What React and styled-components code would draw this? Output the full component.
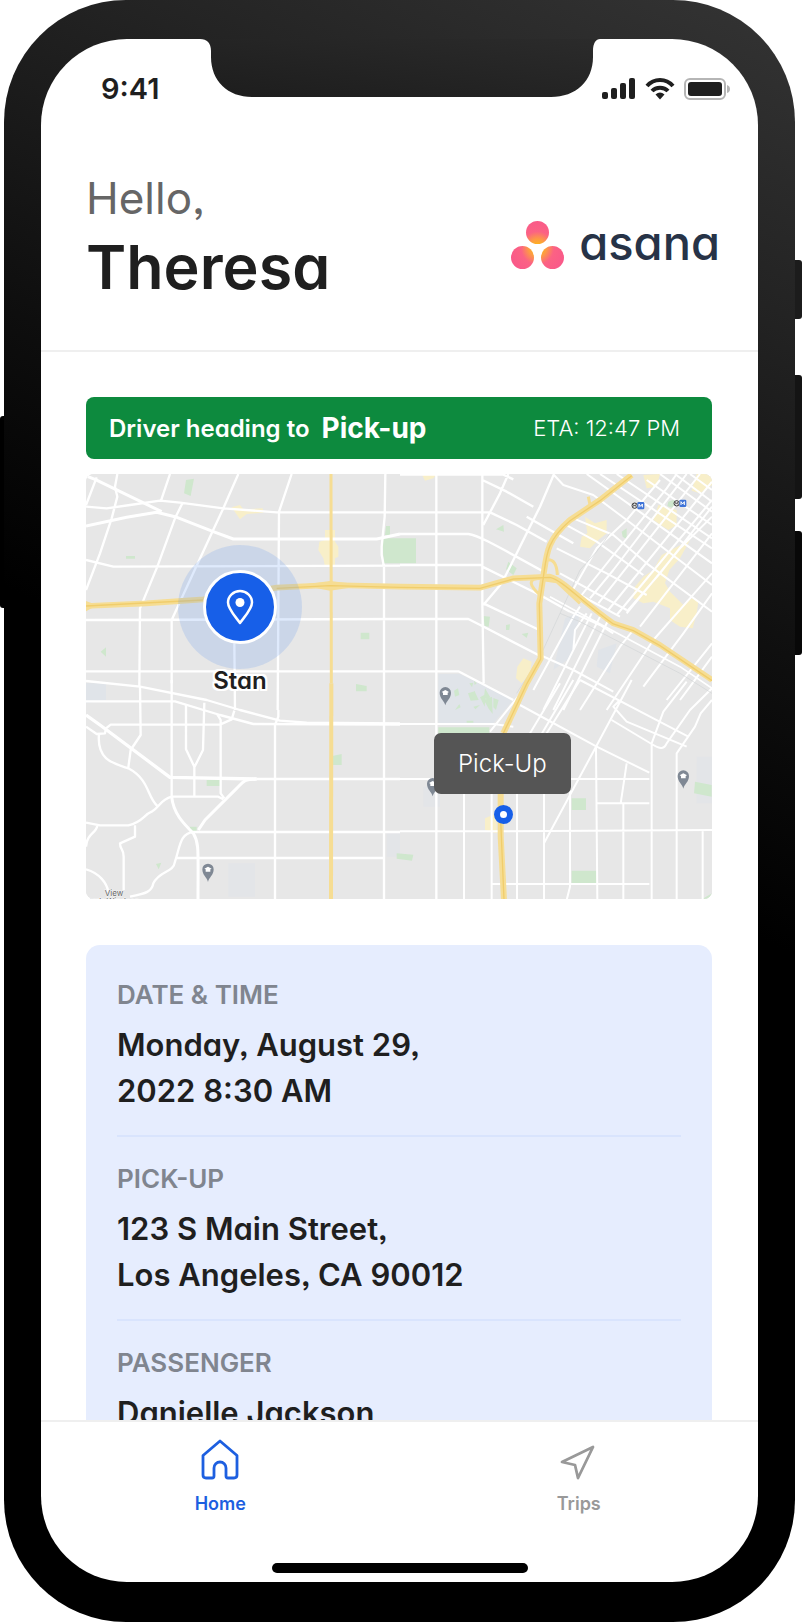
import React from "react";
import styled, { createGlobalStyle } from "styled-components";

const GlobalStyle = createGlobalStyle`
  *, *::before, *::after { box-sizing: border-box; }
  body {
    margin: 0;
    background: #fff;
    color: #1f1f1f;
    font-family: Inter, "Liberation Sans", sans-serif;
    font-feature-settings: "cv11" 1, "ss03" 1;
  }
  h1, p, dl, dt, dd { margin: 0; }
`;

const Stage = styled.div`
  height: 100vh;
  padding: 0 7px 0 4px;
`;

const Phone = styled.div`
  position: relative;
  display: flex;
  height: 100%;
  padding: 39px 37px 40px;
  border-radius: 122px;
  background: linear-gradient(205deg, #343434 0%, #232323 16%, #0e0e0e 34%, #000 48%);
`;

const SideButton = styled.span`
  position: absolute;
  top: ${(p) => p.$top}px;
  height: ${(p) => p.$length}px;
  width: 10px;
  ${(p) => (p.$side === "left" ? "left: -4px;" : "right: -7px;")}
  border-radius: 3px;
  background: ${(p) => p.$color};
  z-index: -1;
`;

const Screen = styled.div`
  flex: 1;
  min-width: 0;
  display: flex;
  flex-direction: column;
  overflow: hidden;
  border-radius: 86px;
  background: #fff;
`;

const StatusBar = styled.div`
  display: grid;
  grid-template-columns: minmax(0, 1fr) 400px minmax(0, 1fr);
  height: 100px;
`;

const Clock = styled.time`
  padding: 32px 0 0 60px;
  font-size: 29px;
  line-height: 36px;
  font-weight: 600;
`;

const StatusIcons = styled.div`
  display: flex;
  justify-content: flex-end;
  align-items: flex-start;
  gap: 9px;
  padding: 39px 28px 0 0;
`;

const Header = styled.header`
  display: flex;
  justify-content: space-between;
  align-items: center;
  padding: 31px 38px 45px 45px;
  border-bottom: 2px solid #efefef;
`;

const Greeting = styled.h1`
  display: flex;
  flex-direction: column;
  gap: 3px;
  font-weight: 600;
  font-size: 61px;
  line-height: 76px;
`;

const Hello = styled.span`
  color: #666;
  font-size: 44px;
  font-weight: 400;
  line-height: 56px;
`;

const Brand = styled.div`
  display: flex;
  align-items: center;
  gap: 15px;
  padding-top: 14px;
`;

const BrandName = styled.span`
  color: #273347;
  font-size: 47px;
  font-weight: 500;
  line-height: 48px;
  padding-bottom: 4px;
`;

const Content = styled.main`
  flex: 1 1 0;
  min-height: 0;
  overflow-y: auto;
  scrollbar-width: none;
  padding: 45px 46px 0 45px;
`;

const Banner = styled.p`
  display: flex;
  align-items: center;
  height: 62px;
  margin-bottom: 15px;
  padding: 0 32px 0 23px;
  border-radius: 8px;
  background: #0d8a3e;
  color: #fff;
  font-size: 24px;
  font-weight: 600;
`;

const Destination = styled.strong`
  margin-left: 12px;
  font-size: 28px;
  font-weight: 700;
`;

const Eta = styled.span`
  margin-left: auto;
  font-size: 22px;
  font-weight: 300;
`;

const MapFrame = styled.section`
  position: relative;
  overflow: hidden;
  aspect-ratio: 626 / 425;
  margin-bottom: 46px;
  border-radius: 8px;
  background: #e7e7e7;
`;

const MapDrawing = styled.svg`
  display: block;
  width: 100%;
  height: 100%;
`;

const DriverPin = styled.div`
  position: absolute;
  left: 24.6%;
  top: 31.3%;
  width: 124px;
  height: 124px;
  margin: -62px 0 0 -62px;
  display: grid;
  place-items: center;
  border-radius: 50%;
  background: rgba(94, 148, 238, 0.2);
`;

const DriverDot = styled.div`
  display: grid;
  place-items: center;
  width: 74px;
  height: 74px;
  border: 3px solid #fff;
  border-radius: 50%;
  background: #175fe8;
`;

const DriverName = styled.span`
  position: absolute;
  top: 122px;
  font-size: 24px;
  font-weight: 600;
  line-height: 28px;
  text-shadow: 2px 0 #fff, -2px 0 #fff, 0 2px #fff, 0 -2px #fff, 2px 2px #fff,
    -2px 2px #fff, 2px -2px #fff, -2px -2px #fff;
`;

const PickupPin = styled.div`
  position: absolute;
  left: 66.7%;
  top: 80.2%;
  width: 19px;
  height: 19px;
  margin: -10px 0 0 -10px;
  border: 6px solid #175fe8;
  border-radius: 50%;
  background: #fff;
`;

const PickupLabel = styled.div`
  position: absolute;
  left: 55.6%;
  top: 60.9%;
  padding: 0 24px;
  border-radius: 7px;
  background: #555;
  color: #fff;
  font-size: 24px;
  font-weight: 300;
  line-height: 61px;
`;

const Details = styled.dl`
  padding: 8px 31px 24px;
  border-radius: 14px;
  background: #e6edfe;
`;

const Detail = styled.div`
  padding: 24px 0 21px;
  border-bottom: 2px solid #d9e4fd;
`;

const DetailLabel = styled.dt`
  margin-bottom: 9px;
  color: #80858f;
  font-size: 26px;
  font-weight: 600;
  line-height: 36px;
  text-transform: uppercase;
`;

const DetailValue = styled.dd`
  max-width: 400px;
  font-size: 31px;
  font-weight: 600;
  line-height: 46px;
  white-space: pre-line;
`;

const TabBar = styled.nav`
  display: grid;
  grid-template-columns: 1fr 1fr;
  padding-top: 16px;
  border-top: 2px solid #efefef;
`;

const Tab = styled.button`
  display: flex;
  flex-direction: column;
  align-items: center;
  gap: 10px;
  padding: 0;
  border: 0;
  background: none;
  color: ${(p) => (p.$active ? "#1d5fe0" : "#999")};
  font: inherit;
  font-size: 18px;
  font-weight: 600;
  line-height: 24px;
`;

const HomeIndicator = styled.div`
  align-self: center;
  width: 256px;
  height: 10px;
  margin: 47px 0 9px;
  border-radius: 5px;
  background: #000;
`;

const Notch = () => (
  <svg width="400" height="58" viewBox="0 0 400 58" aria-hidden="true">
    <defs>
      <linearGradient id="notch" x1="0" y1="1" x2="1" y2="0">
        <stop offset="0" stopColor="#1d1d1d" />
        <stop offset="1" stopColor="#2b2b2b" />
      </linearGradient>
    </defs>
    <path
      d="M0 0C7 0 11 4 11 12V18C11 42 28 58 52 58H351C376 58 393 42 393 18V12C393 4 396 0 400 0Z"
      fill="url(#notch)"
    />
  </svg>
);

const Signal = () => (
  <svg width="34" height="22" viewBox="0 0 34 22" fill="#1f1f1f" aria-hidden="true">
    <rect x="0" y="14" width="6" height="7" rx="2" />
    <rect x="9" y="10" width="6" height="11" rx="2" />
    <rect x="18" y="5" width="6" height="16" rx="2" />
    <rect x="27" y="0" width="6" height="21" rx="2" />
  </svg>
);

const Wifi = () => (
  <svg width="30" height="22" viewBox="0 0 30 22" aria-hidden="true">
    <g fill="none" stroke="#1f1f1f" strokeWidth="4">
      <path d="M2 8C9 0 21 0 28 8" />
      <path d="M7 13C11 8.600 19 8.600 23 13" />
    </g>
    <path d="M10.500 16.500Q15 12.500 19.500 16.500L15 21.500Z" fill="#1f1f1f" />
  </svg>
);

const Battery = () => (
  <svg width="46" height="22" viewBox="0 0 46 22" aria-hidden="true">
    <rect x="1" y="1" width="40" height="20" rx="5" fill="none" stroke="#b5b5b5" strokeWidth="2" />
    <rect x="4" y="4" width="34" height="14" rx="3" fill="#1f1f1f" />
    <path d="M43 7Q46 8 46 11T43 15Z" fill="#b5b5b5" />
  </svg>
);

const BrandMark = () => (
  <svg width="53" height="48" viewBox="0 0 53 48" aria-hidden="true">
    <defs>
      <radialGradient id="mark" gradientUnits="userSpaceOnUse" cx="26.500" cy="27" r="30">
        <stop offset="0" stopColor="#ffc400" />
        <stop offset="0.300" stopColor="#fd9a45" />
        <stop offset="0.550" stopColor="#fb6284" />
        <stop offset="1" stopColor="#f9588a" />
      </radialGradient>
    </defs>
    <g fill="url(#mark)">
      <circle cx="26.500" cy="11.500" r="11.500" />
      <circle cx="11.500" cy="36.500" r="11.500" />
      <circle cx="41.500" cy="36.500" r="11.500" />
    </g>
  </svg>
);

const LocationIcon = () => (
  <svg width="28" height="36" viewBox="0 0 28 36" aria-hidden="true">
    <path
      d="M14 2C7.500 2 2 7 2 13.500C2 20 9 27 14 34C19 27 26 20 26 13.500C26 7 20.500 2 14 2Z"
      fill="none"
      stroke="#fff"
      strokeWidth="2.500"
      strokeLinejoin="round"
    />
    <circle cx="14" cy="13.500" r="4.500" fill="#fff" />
  </svg>
);

const HomeIcon = () => (
  <svg width="42" height="44" viewBox="0 0 42 44" aria-hidden="true">
    <path
      d="M21 3L38 17.500V37Q38 40 35 40H29Q27 40 27 38V30A6 6 0 0 0 15 30V38Q15 40 13 40H7Q4 40 4 37V17.500Z"
      fill="none"
      stroke="currentColor"
      strokeWidth="2.800"
      strokeLinejoin="round"
    />
  </svg>
);

const TripsIcon = () => (
  <svg width="42" height="44" viewBox="0 0 42 44" aria-hidden="true">
    <path
      d="M35 9L20 40L17 27L4 24Z"
      fill="none"
      stroke="currentColor"
      strokeWidth="2.800"
      strokeLinejoin="round"
    />
  </svg>
);

const PlaceMarker = ({ x, y }) => (
  <g transform={`translate(${x} ${y})`}>
    <path d="M0 32C-3 18 -17 12 -17 -6A17 17 0 0 1 17 -6C17 12 3 18 0 32Z" fill="#7f8894" />
    <path d="M-11 -8L0 -14L11 -8L7 -6V1H-7V-6Z" fill="#fff" />
  </g>
);

const MetroMarker = ({ x, y }) => (
  <g transform={`translate(${x} ${y})`}>
    <circle r="8" fill="#eee" stroke="#333" strokeWidth="3" />
    <path d="M-3 3V-3L0 1L3 -3V3" fill="none" stroke="#333" strokeWidth="2" />
    <rect x="8" y="-11" width="21" height="22" rx="4" fill="#3f74d8" />
    <path d="M13 5V-5L18 2L23 -5V5" fill="none" stroke="#fff" strokeWidth="3" />
  </g>
);

const StreetMap = () => (
  <MapDrawing viewBox="18 12 1878 1275" preserveAspectRatio="xMidYMid slice" aria-hidden="true">
    <rect x="0" y="0" width="1920" height="1300" fill="#e7e7e7" />
    {/* water and campuses */}
    <g fill="#e0e4e9">
      <path d="M18 640H78V690L18 700ZM1075 612H1140L1300 690L1240 760H1075ZM1455 445L1500 425L1475 560L1420 600ZM1555 540L1610 520L1590 610L1550 590Z" />
      <path d="M445 1180H525V1280H445ZM1030 950H1080V1010H1030ZM1850 860H1896V1000H1850ZM920 1090H960V1160H920Z" opacity=".5" />
    </g>
    {/* parks */}
    <g fill="#cfe7cd">
      <path d="M905 205H1008V280H912ZM318 30L342 26L332 78L312 70ZM918 168H930V195H915ZM62 545L78 532V560ZM842 488H868V508H842ZM828 642L860 648V664H828ZM138 258H165V266H138Z" />
      <path d="M757 858L785 852V885H757ZM380 930H420V948H380ZM330 1070H350V1086H330ZM228 1182L244 1178L236 1198ZM1075 772H1228V792H1075ZM1475 985H1518V1020H1475ZM1475 1202H1550V1240H1475ZM1845 935L1895 945V980L1842 970ZM1867 1287L1896 1270V1287ZM950 1150L1000 1154L996 1172L950 1166Z" />
      <path d="M1248 178L1270 165L1272 185ZM1285 275L1310 295L1300 315L1278 298ZM1210 438L1230 440L1226 470L1214 468ZM1278 465L1290 463L1288 480L1278 480ZM1325 492L1345 488L1340 504ZM1625 185L1640 175L1640 208L1628 200ZM1765 95L1785 88L1780 115L1762 108ZM1710 40L1722 38L1720 54L1710 50Z" />
      <path d="M1122 662L1134 655L1138 675L1125 680ZM1125 720L1142 712L1138 702ZM1168 640L1180 638L1176 652ZM1164 670L1184 664L1196 690L1172 692ZM1182 632L1190 640L1184 645ZM1180 710L1200 705L1186 718ZM1172 672L1184 662L1180 690ZM1200 682L1218 672L1214 710ZM1215 655L1230 680L1225 692L1212 680ZM1212 690L1236 680L1238 732L1226 716ZM1240 684L1256 690L1248 720L1240 712ZM1160 752H1180V758H1160Z" />
    </g>
    {/* commercial blocks */}
    <g fill="#f8efc9">
      <path d="M455 112L480 105L490 118L548 115L550 128L500 132L480 148ZM735 180H765V290H735L730 265L715 240L718 215L735 210ZM775 230V260L765 265V215ZM1025 12H1070L1060 25L1035 32Z" />
      <path d="M1515 140L1545 160L1580 150V190L1555 210L1530 235L1500 230L1505 200L1522 190ZM1735 105L1790 120L1790 165L1765 180L1720 150ZM1690 15L1740 12L1730 50L1700 55ZM1850 12H1896V45L1860 70L1835 62Z" />
      <path d="M1830 210L1800 265L1768 300L1755 340L1770 365L1790 385L1810 405L1835 385L1855 395L1850 430L1838 475L1800 470L1770 450L1770 415L1720 395L1690 400L1660 385L1665 350L1690 320L1720 300L1745 255ZM1312 590L1330 565L1355 575L1350 610L1325 640L1308 625ZM1215 1045L1250 1030V1090L1215 1080Z" />
    </g>
    {/* streets */}
    <g fill="none" stroke="#fff" strokeWidth="7" strokeLinejoin="round">
      <path d="M18 18L45 28L245 125M18 168L140 142L230 127L285 140L400 185L460 207H890L960 192" strokeWidth="9" />
      <path d="M18 105L50 22M112 12L105 50L112 80L95 145L60 250L18 360M18 110L80 115L150 105L240 92L300 98L430 115L590 127H960M18 270L100 290L960 287M270 12L243 92M308 98L285 145L232 290L180 415L178 650M475 12L430 115L395 190L300 395L275 450V640M635 12L597 125L593 720M916 12L914 140L905 230V255L912 290V720M18 450L960 447M18 604H960M463 520L465 720" />
      <path d="M18 633L180 650L380 690L480 720L600 752L680 758L960 760M18 694H285L420 735L520 762L960 764" />
      <path d="M18 735L60 765L270 922L530 927" strokeWidth="10" />
      <path d="M530 927H960M18 770L50 792L75 790L78 775L92 764H420L455 748L463 722M180 650L182 795L152 840L145 892M57 793C50 870 100 880 145 895C210 930 200 980 232 1008M318 705V838L343 890V978M373 698L369 840L343 892M412 733L422 750V970L433 985M275 980H415L430 988M275 630V980" />
      <path d="M275 980C280 1030 310 1060 340 1090C358 1120 354 1140 354 1290M530 927C490 928 490 935 470 955L375 1050L355 1080" strokeWidth="9" />
      <path d="M18 1058L60 1066H145C190 1055 190 1035 215 1025C240 1010 240 990 275 980M52 1066C50 1090 20 1090 18 1130M165 1066V1100L120 1120C120 1140 131 1135 131 1160V1260M18 1198C60 1210 80 1240 85 1265M150 1280C200 1270 215 1265 220 1240C240 1200 280 1210 285 1175C300 1130 300 1090 340 1086H960M290 1164H912M595 720V740L585 765V1290M912 720V1290" />
      <path d="M1069 12V1290M960 127H1230M960 192H1165C1190 195 1220 210 1400 310M960 285H1207M1207 12V400L1211 640M960 14H1270L1300 28M1207 30L1280 65L1360 110M1285 12L1260 70L1210 165M1422 12L1380 110L1340 190L1290 290L1265 340L1210 405M1230 127L1310 165L1400 215M1207 290L1380 375L1470 425M960 447H1165L1220 475L1375 555M1210 400L1378 480M960 604H1135L1300 690M1340 140L1480 220" />
      {/* downtown grid */}
      <path
        d="M1470 375L1550 235L1640 150L1740 30M1505 375L1760 55L1790 12M1530 385L1600 300L1820 12M1555 400L1860 12M1585 420L1896 35M1610 435L1896 90M1640 425L1740 310L1896 110M1390 720L1535 430M1420 720L1560 440M1450 720L1585 450M1360 660L1480 440L1500 410M1500 720L1620 530L1660 480M1580 720L1660 600L1720 510M1640 430L1800 235L1896 140M1680 470L1896 190M1720 510L1896 310M1480 540L1485 480L1520 430"
        strokeWidth="6"
      />
      <path
        d="M1422 15L1450 45L1540 75L1640 150L1896 345M1520 12L1896 280M1560 12L1896 235M1610 12L1896 205M1700 30L1896 165M1740 12L1896 125M1785 12L1896 95M1830 12L1896 60M1480 145L1600 195L1700 280L1896 425M1450 160L1550 215L1690 315M1430 235L1580 310L1700 375M1440 310L1640 420M1470 425L1560 465L1600 490M1500 375L1620 440"
        strokeWidth="6"
      />
      <path d="M1410 380L1500 430L1800 590L1896 655" strokeWidth="5" />
      <path d="M1690 650L1810 490L1896 370M1760 690L1896 520M1800 690L1830 650L1896 560M1380 555L1480 600L1600 665M1320 705L1550 830L1708 908M1330 660L1230 785M1500 630L1720 745L1825 800M1620 690L1600 710L1640 755L1820 830M1595 750L1720 825Q1750 845 1760 820L1830 720L1896 655M1820 635L1750 725L1715 820V1290M1896 690L1862 730L1845 770L1790 850V1290M1655 630L1548 830L1392 1120L1392 1290M1548 830L1552 1290M960 762H1240L1300 770M960 927H1708M1552 1000H1708M1640 880L1622 1000M1630 1000V1290M960 1084H1232L1896 1080M1235 1242H1708M1868 1080V1290M1235 970V1290M1152 970V1290M1311 970V1290M1392 970V1130M1470 800V1250L1460 1290M1350 790L1440 640M1380 800L1480 630M1400 790L1500 630" strokeWidth="6" />
    </g>
    <path
      d="M1590 190L1550 245L1500 300L1380 560L1310 670M1440 430L1500 455L1800 610L1896 670"
      fill="none"
      stroke="#d2d4d6"
      strokeWidth="2"
    />
    {/* highways */}
    <g fill="none" stroke="#f6dd93" strokeLinejoin="round">
      <path d="M753 12L754 640" strokeWidth="9" />
      <path d="M754 640L753 1290" strokeWidth="12" />
      <path d="M18 408L200 400L370 388L590 353L750 345L960 350L1200 353L1300 325L1410 320C1450 330 1500 390 1600 460L1660 480L1740 525L1896 630" strokeWidth="17" />
      <path d="M1655 15L1560 90L1470 150C1400 210 1400 250 1390 320L1378 400L1382 565L1340 640L1270 790M1262 960V1100L1272 1290" strokeWidth="18" />
      <path d="M1400 270Q1430 265 1432 315M1375 325Q1330 330 1380 375M1395 330L1430 335L1500 400M1525 80L1530 105L1500 130" strokeWidth="9" />
      <path d="M18 393L36 400V414L18 424ZM660 345L750 333L860 346L750 362Z" fill="#f6dd93" stroke="none" />
    </g>
    <g fill="none" stroke="#f0cd6c" strokeWidth="4">
      <path d="M18 408L370 390M590 355L750 347L960 352L1200 355L1300 327L1410 322C1450 332 1500 392 1600 462L1660 482L1740 527L1896 632" />
      <path d="M1655 17L1560 92L1470 152C1400 212 1400 252 1390 322L1378 402L1382 567L1340 642L1270 790M1262 1050L1272 1290" />
    </g>
    <PlaceMarker x={384} y={1204} />
    <PlaceMarker x={1096} y={674} />
    <PlaceMarker x={1058} y={947} />
    <PlaceMarker x={1810} y={924} />
    <MetroMarker x={1664} y={107} />
    <MetroMarker x={1790} y={100} />
    <g fill="#666" stroke="#f5f5f5" strokeWidth="3" paintOrder="stroke" fontSize="24" textAnchor="middle">
      <text x="102" y="1277">View</text>
      <text x="96" y="1301">Park-Windsor</text>
    </g>
  </MapDrawing>
);

const trip = [
  { label: "Date & Time", value: "Monday, August 29,\n2022 8:30 AM" },
  { label: "Pick-up", value: "123 S Main Street,\nLos Angeles, CA 90012" },
  { label: "Passenger", value: "Danielle Jackson" },
];

export default function App() {
  return (
    <Stage>
      <GlobalStyle />
      <Phone>
        <SideButton $side="left" $top={416} $length={192} $color="#000" />
        <SideButton $side="right" $top={260} $length={59} $color="#1c1c1c" />
        <SideButton $side="right" $top={375} $length={124} $color="#141414" />
        <SideButton $side="right" $top={531} $length={124} $color="#080808" />
        <Screen>
          <StatusBar>
            <Clock>9:41</Clock>
            <Notch />
            <StatusIcons>
              <Signal />
              <Wifi />
              <Battery />
            </StatusIcons>
          </StatusBar>
          <Header>
            <Greeting>
              <Hello>Hello,</Hello>
              Theresa
            </Greeting>
            <Brand>
              <BrandMark />
              <BrandName>asana</BrandName>
            </Brand>
          </Header>
          <Content>
            <Banner>
              Driver heading to <Destination>Pick-up</Destination>
              <Eta>ETA: 12:47 PM</Eta>
            </Banner>
            <MapFrame aria-label="Driver location">
              <StreetMap />
              <DriverPin>
                <DriverDot>
                  <LocationIcon />
                </DriverDot>
                <DriverName>Stan</DriverName>
              </DriverPin>
              <PickupPin />
              <PickupLabel>Pick-Up</PickupLabel>
            </MapFrame>
            <Details>
              {trip.map((item) => (
                <Detail key={item.label}>
                  <DetailLabel>{item.label}</DetailLabel>
                  <DetailValue>{item.value}</DetailValue>
                </Detail>
              ))}
            </Details>
          </Content>
          <TabBar>
            <Tab type="button" $active aria-current="page">
              <HomeIcon />
              Home
            </Tab>
            <Tab type="button">
              <TripsIcon />
              Trips
            </Tab>
          </TabBar>
          <HomeIndicator />
        </Screen>
      </Phone>
    </Stage>
  );
}
